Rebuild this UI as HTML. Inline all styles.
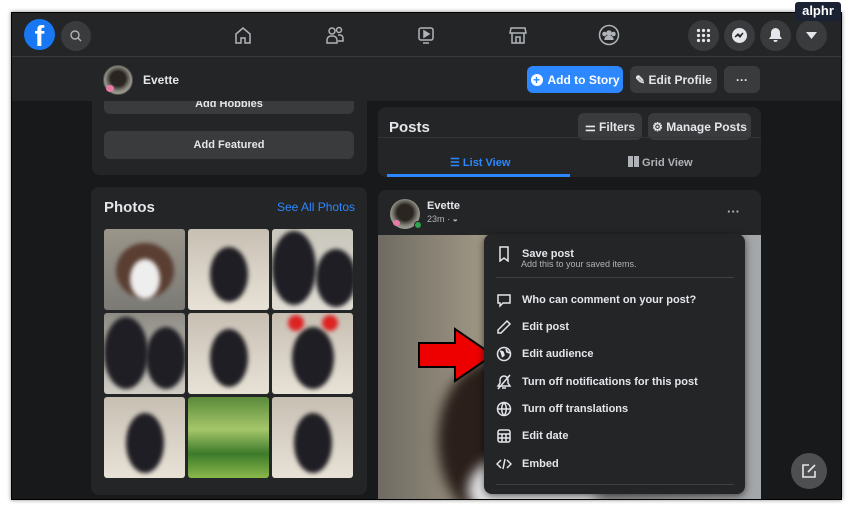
<!DOCTYPE html>
<html><head><meta charset="utf-8"><style>
*{box-sizing:border-box;margin:0;padding:0}
body{width:853px;height:512px;background:#fff;position:relative;overflow:hidden;font-family:"Liberation Sans",sans-serif;color:#e4e6eb}
.a{position:absolute}
#frame{left:11px;top:12px;width:831px;height:488px;background:#18191a;overflow:hidden;box-shadow:0 0 4px #888;border:1px solid #000}
.nav{left:0;top:0;width:831px;height:44px;background:#242526;border-bottom:1px solid #3a3b3c}
.circ{border-radius:50%;background:#3a3b3c}
.btn{border-radius:6px;background:#3a3b3c;font-size:12px;font-weight:bold;display:flex;align-items:center;justify-content:center;gap:5px}
.card{background:#242526;border-radius:8px}
.ph{position:absolute;width:81px;height:81px;border-radius:3px;overflow:hidden}
.ph i{position:absolute;border-radius:50%;background:#1f1e24;filter:blur(2px)}
.mi{position:absolute;left:12px;font-size:11px;font-weight:bold;color:#e4e6eb;display:flex;align-items:center}
.mi svg{width:16px;height:16px;margin-right:10px;stroke:#e4e6eb;fill:none;stroke-width:1.5}
</style></head><body>
<div class="a" id="frame">
 <div class="a nav">
  <div class="a" style="left:12px;top:6px;width:31px;height:31px;border-radius:50%;background:#1877f2;color:#fff;font-weight:bold;font-size:29px;text-align:center;line-height:36px;overflow:hidden">f</div>
  <div class="a circ" style="left:49px;top:8px;width:30px;height:30px"></div>
  <svg class="a" style="left:57px;top:16px" width="14" height="14" viewBox="0 0 14 14" fill="none" stroke="#b0b3b8" stroke-width="1.4"><circle cx="6" cy="6" r="4"/><path d="M9 9l3 3"/></svg>
  <svg class="a" style="left:221px;top:12px" width="20" height="20" viewBox="0 0 20 20" fill="none" stroke="#b0b3b8" stroke-width="1.5"><path d="M3 9L10 3l7 6v9h-5v-5H8v5H3z"/></svg>
  <svg class="a" style="left:313px;top:12px" width="20" height="20" viewBox="0 0 20 20" fill="none" stroke="#b0b3b8" stroke-width="1.5"><circle cx="7" cy="6" r="3"/><circle cx="14" cy="5" r="2.5"/><path d="M2 18v-3a4 4 0 014-4h2a4 4 0 014 4v3zM13 10h2a3 3 0 013 3v3h-5"/></svg>
  <svg class="a" style="left:404px;top:12px" width="20" height="20" viewBox="0 0 20 20" fill="none" stroke="#b0b3b8" stroke-width="1.5"><rect x="3" y="3" width="14" height="12" rx="2"/><path d="M8 6v6l5-3z" fill="#b0b3b8"/><path d="M7 18h6"/></svg>
  <svg class="a" style="left:496px;top:12px" width="20" height="20" viewBox="0 0 20 20" fill="none" stroke="#b0b3b8" stroke-width="1.5"><path d="M3 3h14l1 5H2zM4 8v10h12V8M8 18v-6h4v6"/></svg>
  <svg class="a" style="left:586px;top:11px" width="22" height="22" viewBox="0 0 22 22" fill="none" stroke="#b0b3b8" stroke-width="1.5"><circle cx="11" cy="11" r="9.5"/><circle cx="11" cy="9" r="2" fill="#b0b3b8"/><circle cx="6.5" cy="10" r="1.5" fill="#b0b3b8"/><circle cx="15.5" cy="10" r="1.5" fill="#b0b3b8"/><path d="M7 16a4 4 0 018 0" fill="#b0b3b8"/></svg>
  <div class="a circ" style="left:676px;top:7px;width:31px;height:31px"></div>
  <svg class="a" style="left:684px;top:15px" width="15" height="15" viewBox="0 0 15 15" fill="#e4e6eb"><circle cx="2.5" cy="2.5" r="1.6"/><circle cx="7.5" cy="2.5" r="1.6"/><circle cx="12.5" cy="2.5" r="1.6"/><circle cx="2.5" cy="7.5" r="1.6"/><circle cx="7.5" cy="7.5" r="1.6"/><circle cx="12.5" cy="7.5" r="1.6"/><circle cx="2.5" cy="12.5" r="1.6"/><circle cx="7.5" cy="12.5" r="1.6"/><circle cx="12.5" cy="12.5" r="1.6"/></svg>
  <div class="a circ" style="left:712px;top:7px;width:31px;height:31px"></div>
  <svg class="a" style="left:719px;top:14px" width="17" height="17" viewBox="0 0 17 17"><circle cx="8.5" cy="8.5" r="7.5" fill="#e4e6eb"/><path d="M4 10l3-3 2 2 3-3-3 4-2-2z" stroke="#242526" stroke-width="1.3" fill="none"/></svg>
  <div class="a circ" style="left:748px;top:7px;width:31px;height:31px"></div>
  <svg class="a" style="left:756px;top:14px" width="15" height="16" viewBox="0 0 15 16" fill="#e4e6eb"><path d="M7.5 1a4.5 4.5 0 00-4.5 4.5V9L1 12h13l-2-3V5.5A4.5 4.5 0 007.5 1zM5.5 13a2 2 0 004 0z"/></svg>
  <div class="a circ" style="left:784px;top:7px;width:31px;height:31px"></div>
  <svg class="a" style="left:794px;top:19px" width="11" height="7" viewBox="0 0 11 7" fill="#e4e6eb"><path d="M0 0h11L5.5 7z"/></svg>
 </div>
 <!-- left column -->
 <div class="a card" style="left:80px;top:80px;width:275px;height:82px"></div>
 <div class="a btn" style="left:92px;top:78px;width:250px;height:23px;font-size:11px;align-items:flex-end;overflow:hidden"><span style="margin-bottom:4px">Add Hobbies</span></div>
 <div class="a" style="left:0;top:44px;width:831px;height:44px;background:#242526"></div>
 <div class="a" style="left:91px;top:52px;width:30px;height:30px;border-radius:50%;background:radial-gradient(circle at 50% 45%,#2a2520 35%,#8a8a80 60%,#c9c4b8);border:1px solid #555"></div>
 <div class="a" style="left:94px;top:72px;width:8px;height:7px;border-radius:50%;background:#e87aa8"></div>
 <div class="a" style="left:131px;top:60px;font-size:12px;font-weight:bold">Evette</div>
 <div class="a btn" style="left:515px;top:53px;width:96px;height:27px;background:#2d88ff;color:#fff"><span style="width:12px;height:12px;border-radius:50%;background:#fff;color:#2d88ff;font-size:12px;line-height:12px;text-align:center">+</span>Add to Story</div>
 <div class="a btn" style="left:618px;top:53px;width:87px;height:27px">✎ Edit Profile</div>
 <div class="a btn" style="left:712px;top:53px;width:36px;height:27px">···</div>
 <div class="a btn" style="left:92px;top:118px;width:250px;height:28px;font-size:11px">Add Featured</div>

 <div class="a card" style="left:79px;top:174px;width:276px;height:308px"></div>
 <div class="a" style="left:92px;top:186px;font-size:15px;font-weight:bold">Photos</div>
 <div class="a" style="left:265px;top:187px;font-size:12px;color:#2d88ff">See All Photos</div>
 <div class="ph" style="left:92px;top:216px;background:linear-gradient(#9a958a,#7b7a75)"><i style="left:12px;top:14px;width:58px;height:55px;background:#5a3e32"></i><i style="left:26px;top:30px;width:30px;height:40px;background:#eee"></i></div>
 <div class="ph" style="left:176px;top:216px;background:linear-gradient(#c8bfb3,#e8e2d6)"><i style="left:22px;top:18px;width:38px;height:55px"></i></div>
 <div class="ph" style="left:260px;top:216px;background:linear-gradient(#c9c6bc,#e0ddd5)"><i style="left:0;top:2px;width:44px;height:74px"></i><i style="left:44px;top:20px;width:40px;height:58px"></i></div>
 <div class="ph" style="left:92px;top:300px;background:linear-gradient(#8f8c85,#d0cdc5)"><i style="left:0;top:4px;width:44px;height:72px"></i><i style="left:42px;top:14px;width:40px;height:62px"></i></div>
 <div class="ph" style="left:176px;top:300px;background:linear-gradient(#c8bfb3,#e8e2d6)"><i style="left:22px;top:16px;width:38px;height:58px"></i></div>
 <div class="ph" style="left:260px;top:300px;background:linear-gradient(#c8bfb3,#e8e2d6)"><i style="left:20px;top:14px;width:42px;height:62px"></i><i style="left:16px;top:2px;width:16px;height:16px;background:#d22"></i><i style="left:50px;top:2px;width:16px;height:16px;background:#d22"></i></div>
 <div class="ph" style="left:92px;top:384px;background:linear-gradient(#c8bfb3,#e8e2d6)"><i style="left:22px;top:16px;width:38px;height:60px"></i></div>
 <div class="ph" style="left:176px;top:384px;background:linear-gradient(#5a8a3a,#a6c66a 40%,#3c7a2a 70%,#8ab84a)"></div>
 <div class="ph" style="left:260px;top:384px;background:linear-gradient(#c8bfb3,#e8e2d6)"><i style="left:22px;top:16px;width:38px;height:60px"></i></div>
 <!-- right column -->
 <div class="a card" style="left:366px;top:94px;width:383px;height:70px"></div>
 <div class="a" style="left:377px;top:106px;font-size:15px;font-weight:bold">Posts</div>
 <div class="a btn" style="left:566px;top:100px;width:64px;height:27px">⚌ Filters</div>
 <div class="a btn" style="left:636px;top:100px;width:103px;height:27px">⚙ Manage Posts</div>
 <div class="a" style="left:366px;top:124px;width:383px;height:1px;background:#333"></div>
 <div class="a" style="left:438px;top:143px;font-size:11px;font-weight:bold;color:#2d88ff">☰ List View</div>
 <div class="a" style="left:375px;top:161px;width:183px;height:3px;background:#2d88ff"></div>
 <div class="a" style="left:616px;top:143px;font-size:11px;font-weight:bold;color:#b0b3b8"><span style="display:inline-block;width:11px;height:11px;background:repeating-linear-gradient(90deg,#b0b3b8 0 5px,transparent 5px 6px);vertical-align:-1px"></span> Grid View</div>

 <div class="a card" style="left:366px;top:177px;width:383px;height:320px;overflow:hidden">
  <div class="a" style="left:0;top:45px;width:383px;height:280px;background:linear-gradient(90deg,#6f6b62,#a49b88 30%,#8f918f 60%,#a5a8ab)"></div>
  <div class="a" style="left:60px;top:170px;width:110px;height:160px;border-radius:50%;background:#2a1f1a;filter:blur(6px)"></div>
  <div class="a" style="left:90px;top:260px;width:130px;height:80px;border-radius:50%;background:#e6e6e8;filter:blur(6px)"></div>
 </div>
 <div class="a" style="left:378px;top:186px;width:30px;height:30px;border-radius:50%;background:radial-gradient(circle at 50% 45%,#2a2520 35%,#8a8a80 60%,#c9c4b8)"></div>
 <div class="a" style="left:381px;top:207px;width:7px;height:6px;border-radius:50%;background:#e87aa8"></div>
 <div class="a" style="left:402px;top:208px;width:8px;height:8px;border-radius:50%;background:#31a24c;border:1px solid #242526"></div>
 <div class="a" style="left:415px;top:187px;font-size:11px;font-weight:bold">Evette</div>
 <div class="a" style="left:415px;top:201px;font-size:9px;color:#b0b3b8">23m · ◒</div>
 <div class="a" style="left:715px;top:191px;font-size:13px;font-weight:bold;color:#b0b3b8">···</div>
 <!-- arrow -->
 <svg class="a" style="left:405px;top:314px" width="78" height="56" viewBox="0 0 78 56"><path d="M2 16h36V2l38 26-38 26V40H2z" fill="#e00" stroke="#000" stroke-width="2"/></svg>
 <!-- menu -->
 <div class="a" style="left:472px;top:221px;width:261px;height:260px;background:#242526;border-radius:8px;box-shadow:0 2px 8px rgba(0,0,0,.6)">
  <div class="mi" style="top:12px"><svg viewBox="0 0 16 16"><path d="M4 1h8v14l-4-3-4 3z"/></svg>Save post</div>
  <div class="a" style="left:37px;top:25px;font-size:9px;color:#b0b3b8">Add this to your saved items.</div>
  <div class="a" style="left:12px;top:43px;width:238px;height:1px;background:#3e4042"></div>
  <div class="mi" style="top:58px"><svg viewBox="0 0 16 16"><path d="M2 3h12v8H7l-3 3v-3H2z"/></svg>Who can comment on your post?</div>
  <div class="mi" style="top:85px"><svg viewBox="0 0 16 16"><path d="M11 2l3 3-9 9H2v-3z"/></svg>Edit post</div>
  <div class="mi" style="top:112px"><svg viewBox="0 0 16 16"><circle cx="8" cy="8" r="6.5"/><path d="M4 5l3 1 1 3-2 2M10 3l1 3 3 1" fill="#e4e6eb"/></svg>Edit audience</div>
  <div class="mi" style="top:140px"><svg viewBox="0 0 16 16"><path d="M8 2a4 4 0 00-4 4v3l-2 3h12l-2-3V6a4 4 0 00-4-4zM6 14h4M2 15L14 1"/></svg>Turn off notifications for this post</div>
  <div class="mi" style="top:167px"><svg viewBox="0 0 16 16"><circle cx="8" cy="8" r="6.5"/><path d="M1.5 8h13M8 1.5c3 3 3 10 0 13M8 1.5c-3 3-3 10 0 13"/></svg>Turn off translations</div>
  <div class="mi" style="top:194px"><svg viewBox="0 0 16 16"><rect x="2" y="2" width="12" height="12" rx="2"/><path d="M2 6h12M2 10h12M6 6v8M10 6v8"/></svg>Edit date</div>
  <div class="mi" style="top:222px"><svg viewBox="0 0 16 16"><path d="M5 4L1 8l4 4M11 4l4 4-4 4M9 3L7 13"/></svg>Embed</div>
  <div class="a" style="left:12px;top:250px;width:238px;height:1px;background:#3e4042"></div>
 </div>
 <div class="a circ" style="left:779px;top:440px;width:36px;height:36px;background:#4e4f50"></div>
 <svg class="a" style="left:789px;top:450px" width="16" height="16" viewBox="0 0 16 16" fill="none" stroke="#e4e6eb" stroke-width="1.6"><path d="M8 2H2v12h12V8M7 9l7-7"/></svg>
</div>
<div class="a" style="left:795px;top:2px;width:46px;height:19px;background:#1a2233;border-radius:3px;color:#fff;font-size:13px;font-weight:bold;text-align:center;line-height:18px">alphr</div>
</body></html>
